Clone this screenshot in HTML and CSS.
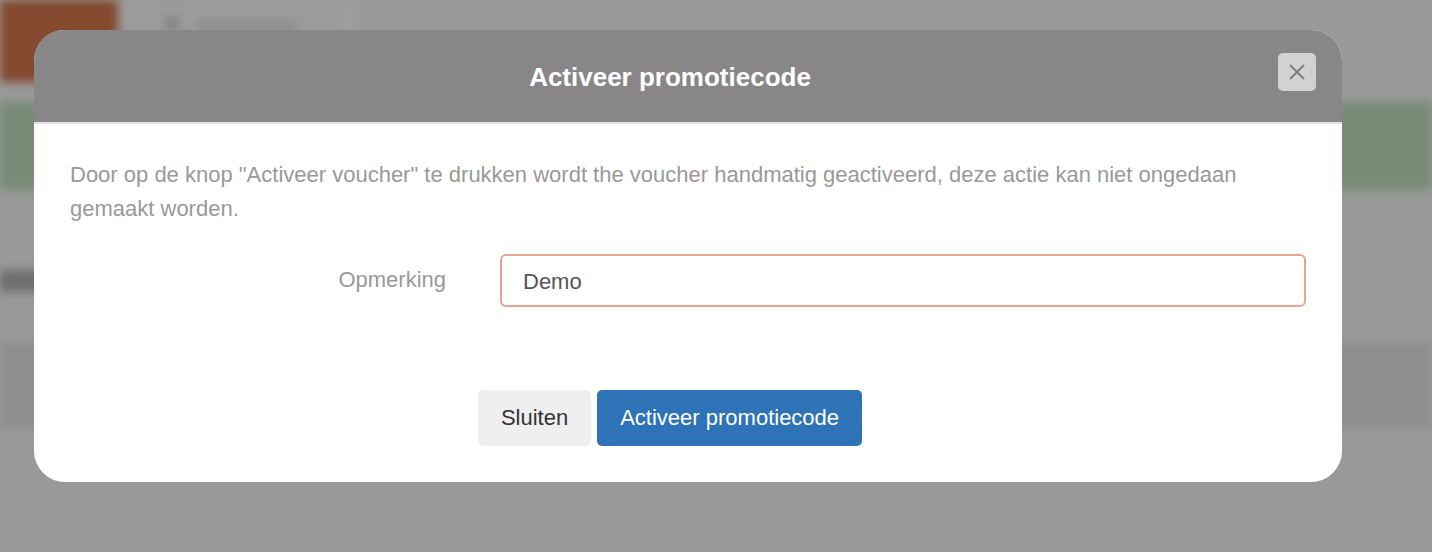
FILE: index.html
```html
<!DOCTYPE html>
<html lang="nl">
<head>
<meta charset="utf-8">
<title>Activeer promotiecode</title>
<link rel="stylesheet" href="styles.css">
</head>
<body>
<div class="backdrop">
  <div class="topbar">
    <div class="brand"></div>
    <div class="nav">
      <span class="nav-icon"></span>
      <span class="nav-text"></span>
    </div>
    <div class="nav-rest"></div>
  </div>
  <div class="alert"></div>
  <div class="table-head"></div>
  <div class="table-row"></div>
</div>

<div class="modal">
  <div class="modal-header">
    <h4 class="modal-title">Activeer promotiecode</h4>
    <button class="close" type="button" aria-label="Sluiten">
      <svg width="16" height="16" viewBox="0 0 16 16"><path d="M1.5 1.5 L14.5 14.5 M14.5 1.5 L1.5 14.5" stroke="#7b7b7b" stroke-width="1.8" fill="none" stroke-linecap="round"/></svg>
    </button>
  </div>
  <div class="modal-body">
    <p class="intro">Door op de knop "Activeer voucher" te drukken wordt the voucher handmatig geactiveerd, deze actie kan niet ongedaan gemaakt worden.</p>
    <div class="form-row">
      <label class="form-label" for="remark">Opmerking</label>
      <input class="form-input" id="remark" type="text" value="Demo">
    </div>
  </div>
  <div class="modal-footer">
    <button class="btn btn-default" type="button">Sluiten</button>
    <button class="btn btn-primary" type="button">Activeer promotiecode</button>
  </div>
</div>
</body>
</html>
```

FILE: styles.css
```css
html, body {
  margin: 0;
  padding: 0;
  height: 100%;
  overflow: hidden;
  background: #999999;
  font-family: "Liberation Sans", Arial, Helvetica, sans-serif;
}

/* blurred page behind the overlay */
.backdrop {
  height: 552px;
  background: #999999;
  filter: blur(5px);
  display: flex;
  flex-direction: column;
}

.topbar {
  height: 82px;
  display: flex;
  background: #9a9a9a;
}

.brand {
  width: 118px;
  background: #84492f;
}

.nav {
  width: 228px;
  display: flex;
  align-items: flex-start;
  gap: 16px;
  padding: 16px 0 0 46px;
  box-sizing: border-box;
  background: #9b9b9b;
}

.nav-icon {
  width: 16px;
  height: 16px;
  border-radius: 50%;
  background: #848484;
}

.nav-text {
  width: 100px;
  height: 10px;
  margin-top: 5px;
  background: #8c8c8c;
}

.nav-rest {
  flex: 1;
  border-left: 6px solid #a0a0a0;
  background: #999999;
}

.alert {
  height: 88px;
  margin-top: 20px;
  background: #788b76;
}

.table-head {
  width: 320px;
  height: 22px;
  margin-top: 80px;
  background: #6e6e6e;
}

.table-row {
  height: 86px;
  margin-top: 50px;
  background: #8f8f8f;
}

/* modal */
.modal {
  position: absolute;
  top: 30px;
  left: 34px;
  width: 1308px;
  height: 452px;
  background: #ffffff;
  border-radius: 31px;
  overflow: hidden;
  display: flex;
  flex-direction: column;
}

.modal-header {
  height: 92px;
  background: #888686;
  border-bottom: 2px solid #e3e3e3;
  display: flex;
  align-items: center;
  padding: 0 26px 0 0;
}

.modal-title {
  flex: 1;
  margin: 0;
  text-align: center;
  color: #ffffff;
  font-size: 26px;
  font-weight: bold;
  line-height: 30px;
  padding-top: 2px;
}

.close {
  width: 38px;
  height: 38px;
  margin-left: -28px;
  margin-top: -8px;
  border: none;
  border-radius: 5px;
  background: #d2d2d2;
  padding: 0;
  display: flex;
  align-items: center;
  justify-content: center;
}

.modal-body {
  padding: 34px 36px 0 36px;
}

.intro {
  margin: 0;
  font-size: 22px;
  line-height: 34px;
  color: #999999;
}

.form-row {
  margin-top: 28px;
  display: grid;
  grid-template-columns: 376px 1fr;
  column-gap: 54px;
  align-items: center;
}

.form-label {
  text-align: right;
  font-size: 22px;
  color: #999999;
  padding-bottom: 2px;
}

.form-input {
  height: 53px;
  box-sizing: border-box;
  border: 2px solid #e8a48e;
  border-radius: 6px;
  padding: 2px 21px 0 21px;
  font-family: "Liberation Sans", Arial, Helvetica, sans-serif;
  font-size: 22px;
  color: #555555;
  outline: none;
}

.modal-footer {
  margin-top: 83px;
  padding: 0 36px 0 0;
  display: flex;
  justify-content: center;
  gap: 6px;
}

.btn {
  height: 56px;
  border: none;
  border-radius: 5px;
  font-family: "Liberation Sans", Arial, Helvetica, sans-serif;
  font-size: 22px;
  padding: 0 23px;
}

.btn-default {
  background: #efefef;
  color: #333333;
}

.btn-primary {
  background: #2e72b8;
  color: #ffffff;
}
```
